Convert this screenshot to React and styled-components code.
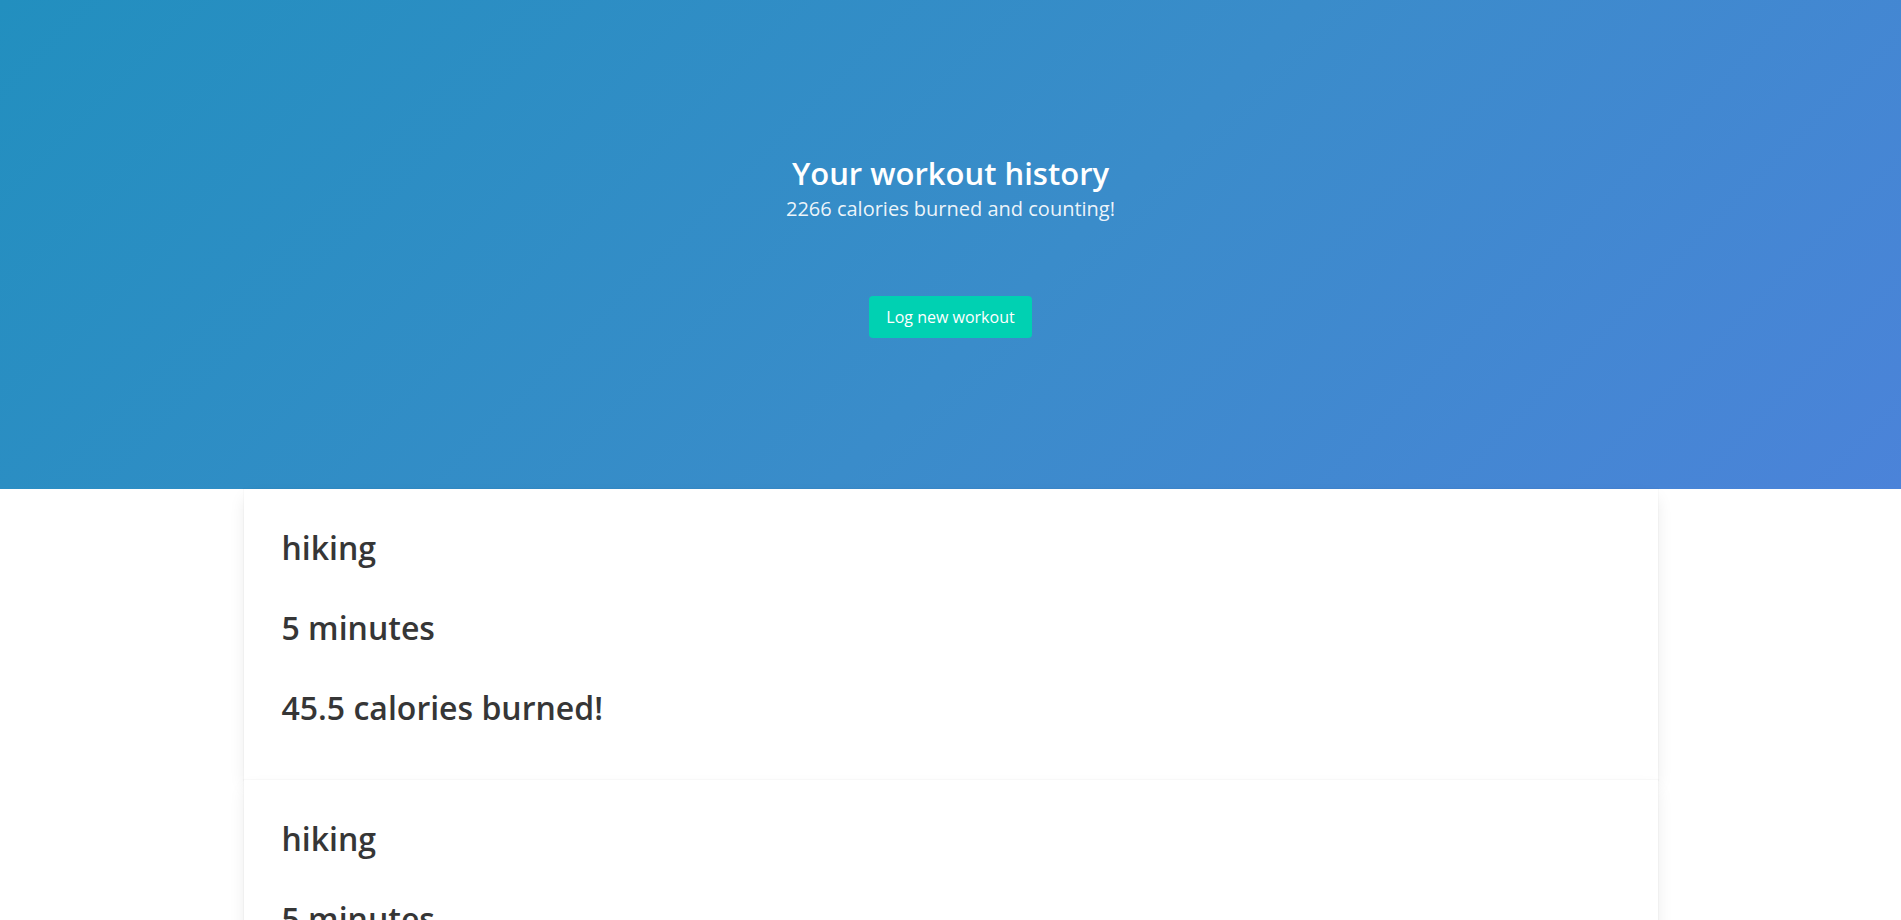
import React from 'react'
import styled, {createGlobalStyle} from 'styled-components'

const GlobalStyle = createGlobalStyle`
  body {
    margin: 0;
    background: #fff;
    font-family: "Open Sans", "Noto Sans", sans-serif;
    color: #363636;
  }
`;

const Hero = styled.section`
  height: 489px;
  box-sizing: border-box;
  padding-top: 155px;
  display: flex;
  flex-direction: column;
  align-items: center;
  background: linear-gradient(135deg, #228fbf 0%, #3a8cca 55%, #4b83d9 100%);
  color: #fff;
`;

const Title = styled.h1`
  margin: 0;
  font-size: 31px;
  line-height: 36px;
  font-weight: 600;
`;

const Subtitle = styled.h2`
  margin: 5px 0 0;
  font-size: 20px;
  line-height: 25px;
  font-weight: 400;
  color: rgba(255, 255, 255, 0.92);
`;

const Button = styled.button`
  margin-top: 75px;
  height: 42px;
  padding: 0 17px;
  border: none;
  border-radius: 4px;
  background: #00d1b2;
  color: #fff;
  font-family: inherit;
  font-size: 16px;
  cursor: pointer;
`;

const List = styled.div`
  max-width: 1414px;
  margin: 0 auto;
`;

const Card = styled.article`
  background: #fff;
  padding: 41px 38px 54px;
  display: flex;
  flex-direction: column;
  gap: 44px;
  box-shadow: 0 0.5em 1em -0.125em rgba(10, 10, 10, 0.1), 0 0 0 1px rgba(10, 10, 10, 0.02);
`;

const Line = styled.h3`
  margin: 0;
  font-size: 32px;
  line-height: 36px;
  font-weight: 600;
  color: #363636;
`;

const workouts = [
  {type: 'hiking', minutes: 5, calories: 45.5},
  {type: 'hiking', minutes: 5, calories: 45.5},
  {type: 'hiking', minutes: 5, calories: 45.5},
];

export default function App() {
  return (
    <>
      <GlobalStyle/>
      <Hero>
        <Title>Your workout history</Title>
        <Subtitle>2266 calories burned and counting!</Subtitle>
        <Button>Log new workout</Button>
      </Hero>
      <List>
        {workouts.map((w, i) => (
          <Card key={i}>
            <Line>{w.type}</Line>
            <Line>{w.minutes} minutes</Line>
            <Line>{w.calories} calories burned!</Line>
          </Card>
        ))}
      </List>
    </>
  );
}
